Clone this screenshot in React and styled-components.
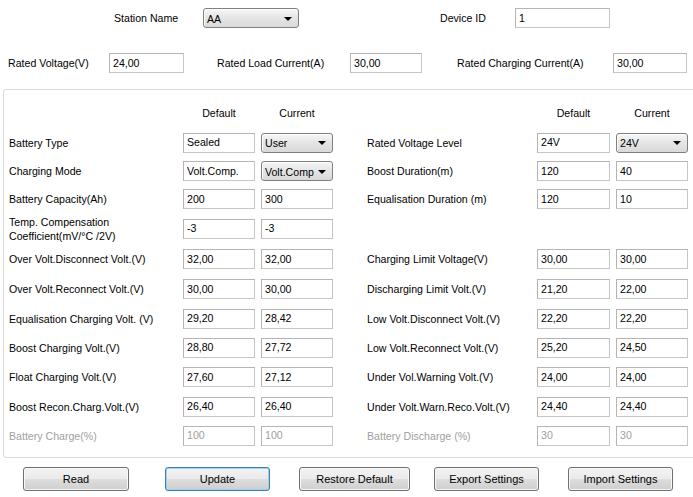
import styled, { createGlobalStyle } from 'styled-components';

const GlobalStyle = createGlobalStyle`
  html, body {
    margin: 0;
    padding: 0;
    background: #ffffff;
  }
  body {
    font-family: "Liberation Sans", Arial, sans-serif;
    font-size: 10.6px;
    color: #000;
    width: 693px;
    height: 497px;
    overflow: hidden;
  }
`;

const leftRows = [
  { label: 'Battery Type', def: 'Sealed', cur: 'User', select: true, h: 29 },
  { label: 'Charging Mode', def: 'Volt.Comp.', cur: 'Volt.Comp', select: true, h: 28 },
  { label: 'Battery Capacity(Ah)', def: '200', cur: '300', h: 28 },
  { label: ['Temp. Compensation', 'Coefficient(mV/°C /2V)'], def: '-3', cur: '-3', h: 31 },
  { label: 'Over Volt.Disconnect Volt.(V)', def: '32,00', cur: '32,00', h: 30 },
  { label: 'Over Volt.Reconnect Volt.(V)', def: '30,00', cur: '30,00', h: 30 },
  { label: 'Equalisation Charging Volt. (V)', def: '29,20', cur: '28,42', h: 29 },
  { label: 'Boost Charging Volt.(V)', def: '28,80', cur: '27,72', h: 29 },
  { label: 'Float Charging Volt.(V)', def: '27,60', cur: '27,12', h: 30 },
  { label: 'Boost Recon.Charg.Volt.(V)', def: '26,40', cur: '26,40', h: 29 },
  { label: 'Battery Charge(%)', def: '100', cur: '100', disabled: true, h: 29 },
];

const rightRows = [
  { label: 'Rated Voltage Level', def: '24V', cur: '24V', select: true },
  { label: 'Boost Duration(m)', def: '120', cur: '40' },
  { label: 'Equalisation Duration (m)', def: '120', cur: '10' },
  null,
  { label: 'Charging Limit Voltage(V)', def: '30,00', cur: '30,00' },
  { label: 'Discharging Limit Volt.(V)', def: '21,20', cur: '22,00' },
  { label: 'Low Volt.Disconnect Volt.(V)', def: '22,20', cur: '22,20' },
  { label: 'Low Volt.Reconnect Volt.(V)', def: '25,20', cur: '24,50' },
  { label: 'Under Vol.Warning Volt.(V)', def: '24,00', cur: '24,00' },
  { label: 'Under Volt.Warn.Reco.Volt.(V)', def: '24,40', cur: '24,40' },
  { label: 'Battery Discharge (%)', def: '30', cur: '30', disabled: true },
];

const buttons = [
  { text: 'Read', w: 106 },
  { text: 'Update', w: 105, focused: true },
  { text: 'Restore Default', w: 111 },
  { text: 'Export Settings', w: 105 },
  { text: 'Import Settings', w: 105 },
];

const Combo = ({ value, width }) => (
  <ComboBox $w={width}>
    <span>{value}</span>
    <Arrow />
  </ComboBox>
);

const Field = ({ value, width = 72, disabled }) => (
  <TextBox $w={width} $disabled={disabled} value={value} readOnly />
);

const renderLabel = (label, disabled) => (
  <Label $disabled={disabled}>
    {Array.isArray(label) ? label.map((l) => <div key={l}>{l}</div>) : label}
  </Label>
);

const App = () => {
  return (
    <Page>
      <GlobalStyle />
      <TopRow>
        <Label $w={89}>Station Name</Label>
        <Combo value="AA" width={96} />
        <Label $w={75} $ml={141}>Device ID</Label>
        <Field value="1" width={95} />
      </TopRow>
      <RatedRow>
        <Label $w={101}>Rated Voltage(V)</Label>
        <Field value="24,00" width={75} />
        <Label $w={133} $ml={33}>Rated Load Current(A)</Label>
        <Field value="30,00" width={72} />
        <Label $w={156} $ml={35}>Rated Charging Current(A)</Label>
        <Field value="30,00" width={74} />
      </RatedRow>

      <Group>
        <Row $h={30}>
          <span />
          <ColHead>Default</ColHead>
          <ColHead>Current</ColHead>
          <span />
          <ColHead $w={73}>Default</ColHead>
          <ColHead>Current</ColHead>
        </Row>
        {leftRows.map((r, i) => {
          const rr = rightRows[i];
          return (
            <Row key={i} $h={r.h}>
              {renderLabel(r.label, r.disabled)}
              <Field value={r.def} disabled={r.disabled} />
              {r.select ? <Combo value={r.cur} width={72} /> : <Field value={r.cur} disabled={r.disabled} />}
              {rr ? renderLabel(rr.label, rr.disabled) : <span />}
              {rr ? <Field value={rr.def} width={73} disabled={rr.disabled} /> : <span />}
              {rr ? (
                rr.select ? <Combo value={rr.cur} width={72} /> : <Field value={rr.cur} disabled={rr.disabled} />
              ) : (
                <span />
              )}
            </Row>
          );
        })}
      </Group>

      <ButtonBar>
        {buttons.map((b) => (
          <Button key={b.text} $w={b.w} $focused={b.focused} type="button">
            {b.text}
          </Button>
        ))}
      </ButtonBar>
    </Page>
  );
};

export default App;

const Page = styled.div`
  width: 693px;
  height: 497px;
  overflow: hidden;
`;

const TopRow = styled.div`
  display: flex;
  align-items: center;
  height: 20px;
  padding: 8px 0 0 114px;
`;

const RatedRow = styled.div`
  display: flex;
  align-items: center;
  height: 20px;
  padding: 25px 0 0 8px;
`;

const Label = styled.div`
  flex: none;
  width: ${(p) => (p.$w ? `${p.$w}px` : 'auto')};
  margin-left: ${(p) => p.$ml || 0}px;
  line-height: 14px;
  white-space: nowrap;
  color: ${(p) => (p.$disabled ? '#a0a0a0' : '#000')};
`;

const TextBox = styled.input`
  flex: none;
  box-sizing: border-box;
  width: ${(p) => p.$w}px;
  height: 20px;
  margin: 0;
  padding: 0 0 1px 3px;
  border: 1px solid #c6c6c6;
  border-top-color: #b4b4b4;
  border-left-color: #b4b4b4;
  background: #fff;
  font-family: inherit;
  font-size: 10.6px;
  color: ${(p) => (p.$disabled ? '#a0a0a0' : '#000')};
  outline: none;
`;

const ComboBox = styled.div`
  flex: none;
  box-sizing: border-box;
  width: ${(p) => p.$w}px;
  height: 20px;
  display: flex;
  align-items: center;
  justify-content: space-between;
  padding: 1px 6px 0 3px;
  border: 1px solid #7f7f7f;
  border-radius: 3px;
  background: linear-gradient(#f7f7f7 0%, #e6e6e6 45%, #d9d9d9 100%);
  box-shadow: inset 1px 1px 0 #ffffff;
`;

const Arrow = styled.span`
  width: 0;
  height: 0;
  border-left: 4px solid transparent;
  border-right: 4px solid transparent;
  border-top: 4px solid #000;
`;

const Group = styled.div`
  margin: 16px -10px 0 3px;
  padding: 8px 0 7px 5px;
  border: 1px solid #d9d9e0;
  border-radius: 3px;
`;

const Row = styled.div`
  display: grid;
  grid-template-columns: 174px 78px 106px 170px 79px 72px;
  align-items: center;
  height: ${(p) => p.$h || 29}px;
`;

const ColHead = styled.div`
  width: ${(p) => p.$w || 72}px;
  text-align: center;
`;

const ButtonBar = styled.div`
  display: grid;
  grid-template-columns: 142px 134px 135px 134px 105px;
  padding: 9px 0 0 23px;
`;

const Button = styled.button`
  box-sizing: border-box;
  width: ${(p) => p.$w}px;
  height: 24px;
  margin: 0;
  padding: 0;
  font-family: inherit;
  font-size: 11px;
  color: #000;
  border: 1px solid ${(p) => (p.$focused ? '#3c7fb1' : '#707070')};
  border-radius: 3px;
  background: linear-gradient(#f2f2f2 0%, #ebebeb 50%, #dddddd 51%, #cfcfcf 100%);
  box-shadow: ${(p) => (p.$focused ? 'inset 0 0 0 1px #9fd0ef' : 'inset 0 0 0 1px #f8f8f8')};
`;
